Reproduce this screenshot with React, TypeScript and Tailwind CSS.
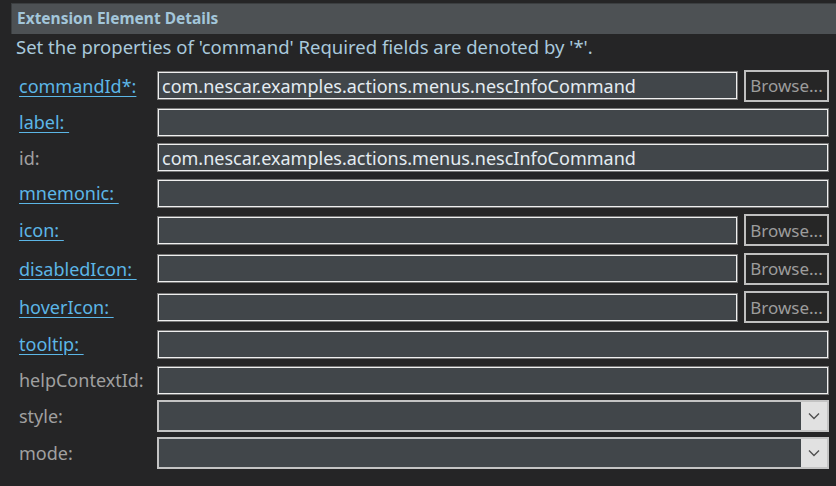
import React from "react";

type RowDef = {
  label: string;
  link: boolean;
  kind: "text" | "browse" | "combo";
  value?: string;
  h: string;
};

const rows: RowDef[] = [
  { label: "commandId*:", link: true, kind: "browse", value: "com.nescar.examples.actions.menus.nescInfoCommand", h: "h-[37px]" },
  { label: "label: ", link: true, kind: "text", h: "h-[36px]" },
  { label: "id:", link: false, kind: "text", value: "com.nescar.examples.actions.menus.nescInfoCommand", h: "h-[35px]" },
  { label: "mnemonic: ", link: true, kind: "text", h: "h-[36px]" },
  { label: "icon: ", link: true, kind: "browse", h: "h-[38px]" },
  { label: "disabledIcon: ", link: true, kind: "browse", h: "h-[39px]" },
  { label: "hoverIcon: ", link: true, kind: "browse", h: "h-[38px]" },
  { label: "tooltip: ", link: true, kind: "text", h: "h-[36px]" },
  { label: "helpContextId:", link: false, kind: "text", h: "h-[36px]" },
  { label: "style:", link: false, kind: "combo", h: "h-[36px]" },
  { label: "mode:", link: false, kind: "combo", h: "h-[38px]" },
];

function TextBox({ value }: { value?: string }) {
  return (
    <div className="flex-1 h-[29px] bg-[#41464a] border border-[#767676] shadow-[inset_0_0_0_1px_#efefef] flex items-center pl-[4px] text-[#e4ecf2] text-[18px] leading-none whitespace-nowrap overflow-hidden">
      {value}
    </div>
  );
}

function Browse() {
  return (
    <div className="ml-[6px] w-[85px] h-[32px] border-2 border-[#bfbfbf] bg-[#262626] flex items-center justify-center text-[#9c9c9c] text-[17px] leading-none">
      Browse...
    </div>
  );
}

function Combo() {
  return (
    <div className="flex-1 h-[32px] border-2 border-[#c4c4c4] bg-[#41464a] flex">
      <div className="flex-1" />
      <div className="w-[26px] bg-[#e1e1e1] flex items-center justify-center">
        <svg width="12" height="8" viewBox="0 0 12 8">
          <polyline points="1,1.5 6,6.5 11,1.5" fill="none" stroke="#505050" strokeWidth="1.4" />
        </svg>
      </div>
    </div>
  );
}

export default function App() {
  return (
    <div
      className="w-[836px] h-[486px] bg-[#252526] overflow-hidden relative"
      style={{ fontFamily: '"Noto Sans", "Open Sans", sans-serif' }}
    >
      <div className="pt-[3px] pl-[11px]">
        <div className="h-[31px] bg-[#4d5154] border-t border-l border-[#3b3e40] flex items-center pl-[5px]">
          <span className="text-[#a3c6da] font-bold text-[15.5px] leading-none">Extension Element Details</span>
        </div>
      </div>
      <div className="h-[27px] flex items-center pl-[16px] text-[#a9c9dc] text-[18.5px] leading-none whitespace-nowrap">
        Set the properties of 'command' Required fields are denoted by '*'.
      </div>
      <div className="mt-[6px] flex flex-col pr-[7px]">
        {rows.map((r, i) => (
          <div key={i} className={`${r.h} flex items-center`}>
            <div className="w-[157px] pl-[19px] text-[18px] leading-none whitespace-pre">
              {r.link ? (
                <span className="text-[#5cb6e6] underline underline-offset-[3px]">{r.label}</span>
              ) : (
                <span className="text-[#a0a0a0]">{r.label}</span>
              )}
            </div>
            <div className="flex-1 flex items-center">
              {r.kind === "combo" ? <Combo /> : <TextBox value={r.value} />}
              {r.kind === "browse" && <Browse />}
            </div>
          </div>
        ))}
      </div>
    </div>
  );
}
